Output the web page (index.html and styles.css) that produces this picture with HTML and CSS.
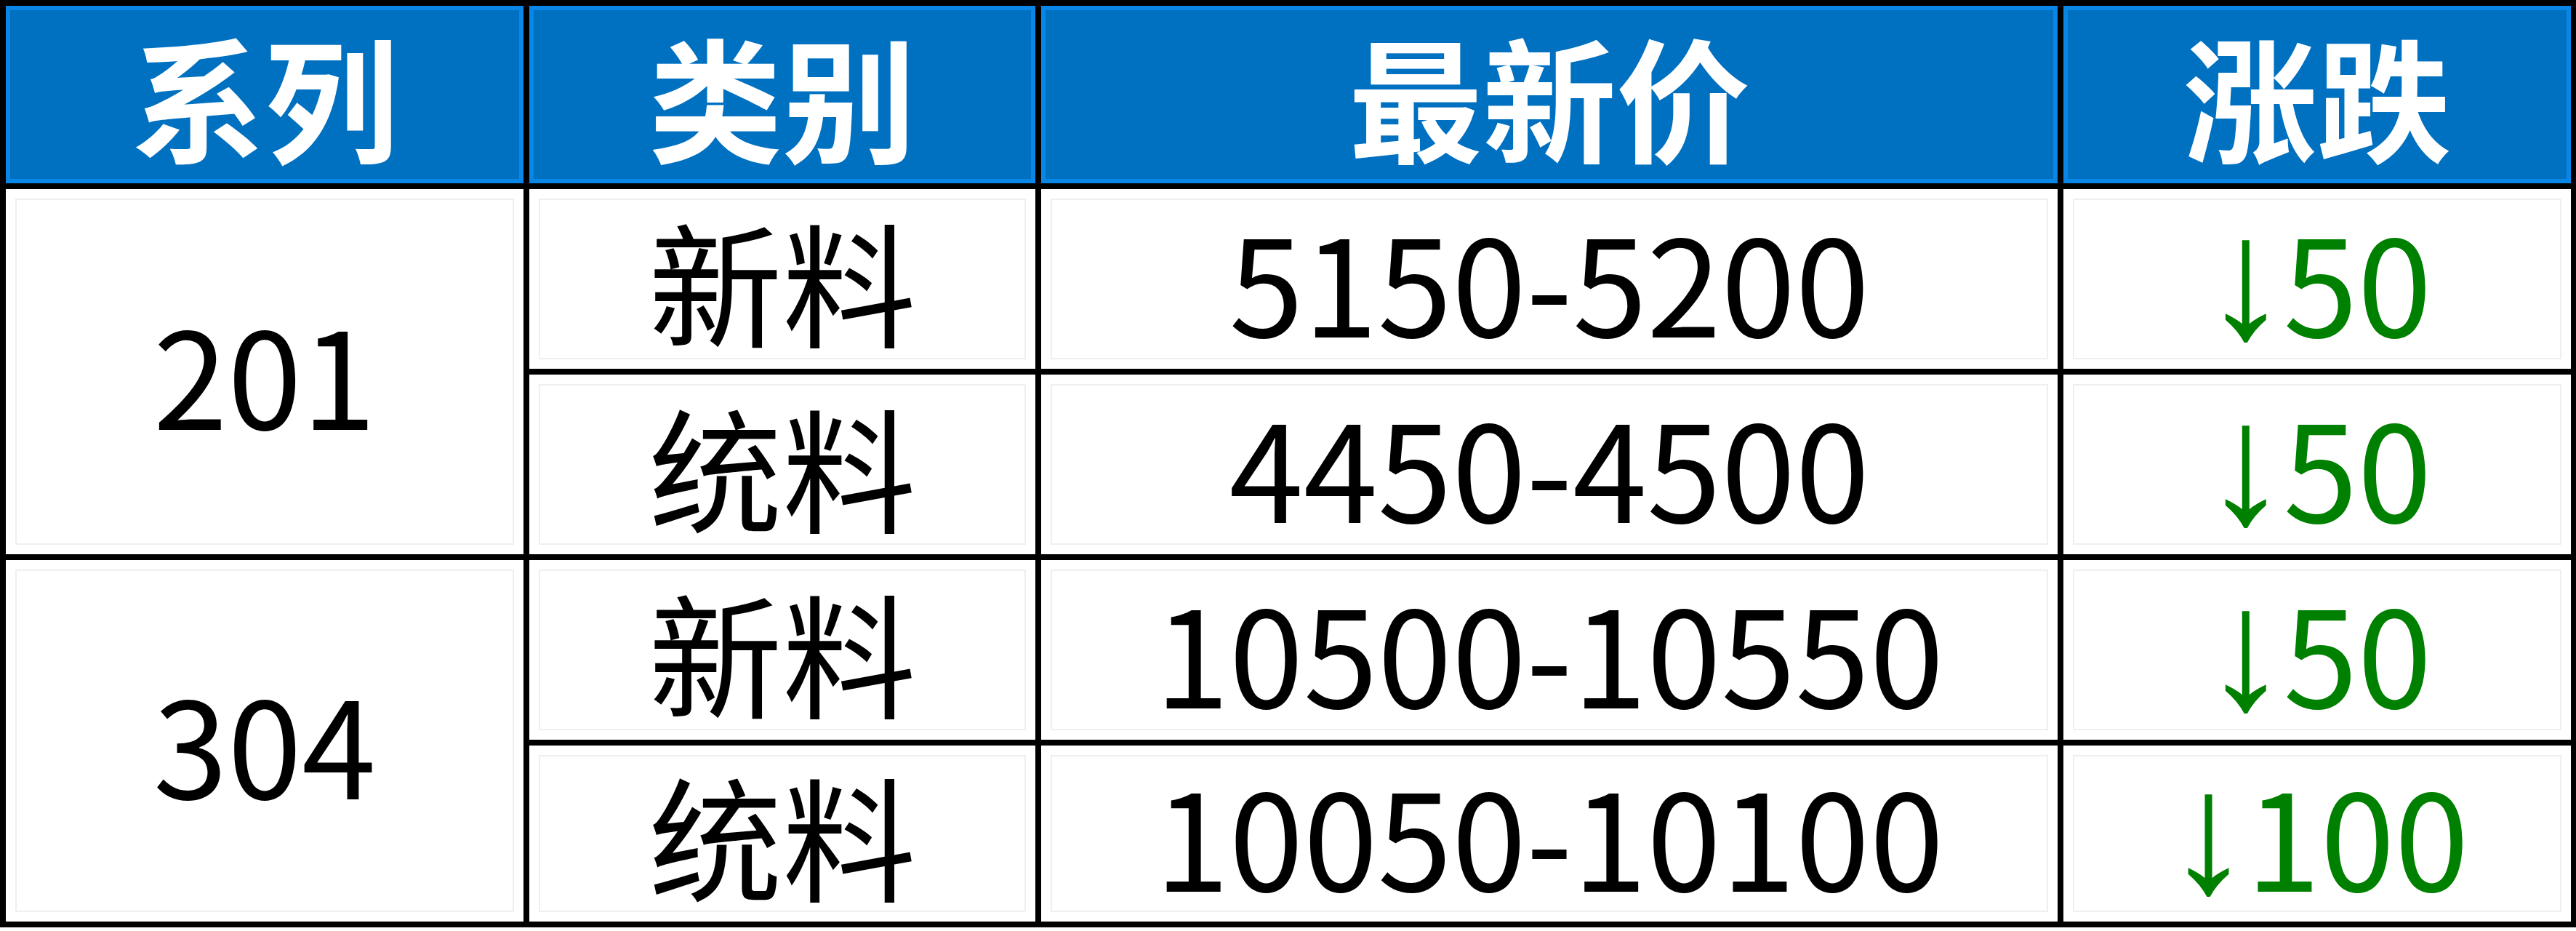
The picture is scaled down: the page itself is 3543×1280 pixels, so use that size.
FILE: index.html
```html
<!DOCTYPE html>
<html lang="zh-CN">
<head>
<meta charset="utf-8">
<title>价格表</title>
<link rel="stylesheet" href="styles.css">
</head>
<body>
<table class="price-table">
  <colgroup>
    <col class="c1"><col class="c2"><col class="c3"><col class="c4">
  </colgroup>
  <thead>
    <tr class="head-row">
      <th>系列</th><th>类别</th><th>最新价</th><th>涨跌</th>
    </tr>
  </thead>
  <tbody>
    <tr class="r1">
      <td rowspan="2">201</td><td>新料</td><td>5150-5200</td><td class="chg"><span class="arrow">↓</span>50</td>
    </tr>
    <tr class="r2">
      <td>统料</td><td>4450-4500</td><td class="chg"><span class="arrow">↓</span>50</td>
    </tr>
    <tr class="r3">
      <td rowspan="2">304</td><td>新料</td><td>10500-10550</td><td class="chg"><span class="arrow">↓</span>50</td>
    </tr>
    <tr class="r4">
      <td>统料</td><td>10050-10100</td><td class="chg"><span class="arrow">↓</span>100</td>
    </tr>
  </tbody>
</table>
</body>
</html>
```
FILE: styles.css
```css
html, body {
  margin: 0;
  padding: 0;
  background: #ffffff;
}
body {
  width: 3543px;
  height: 1280px;
  overflow: hidden;
}
.price-table {
  border-collapse: collapse;
  table-layout: fixed;
  width: 3536px;
  font-family: "Noto Sans CJK SC", "Noto Sans", sans-serif;
  font-size: 184px;
  color: #000000;
}
.c1 { width: 720px; }
.c2 { width: 704px; }
.c3 { width: 1406px; }
.c4 { width: 706px; }
.price-table th,
.price-table td {
  border: 8px solid #000000;
  padding: 0;
  text-align: center;
  vertical-align: middle;
  line-height: 1;
}
.price-table th {
  background: #0070c0;
  color: #ffffff;
  font-weight: 700;
  height: 244px;
  box-shadow: inset 0 0 0 6px #0a86e6;
}
.price-table td {
  font-weight: 400;
  box-shadow: inset 0 0 0 13px #ffffff, inset 0 0 0 15px #efefef;
}
.r1 td, .r2 td, .r3 td { height: 247px; }
.r4 td { height: 242px; }
.chg {
  color: #008000;
}
.arrow {
  font-family: "Liberation Sans", Arial, sans-serif;
  font-size: 238px;
  line-height: 0;
  letter-spacing: -8px;
}
```
